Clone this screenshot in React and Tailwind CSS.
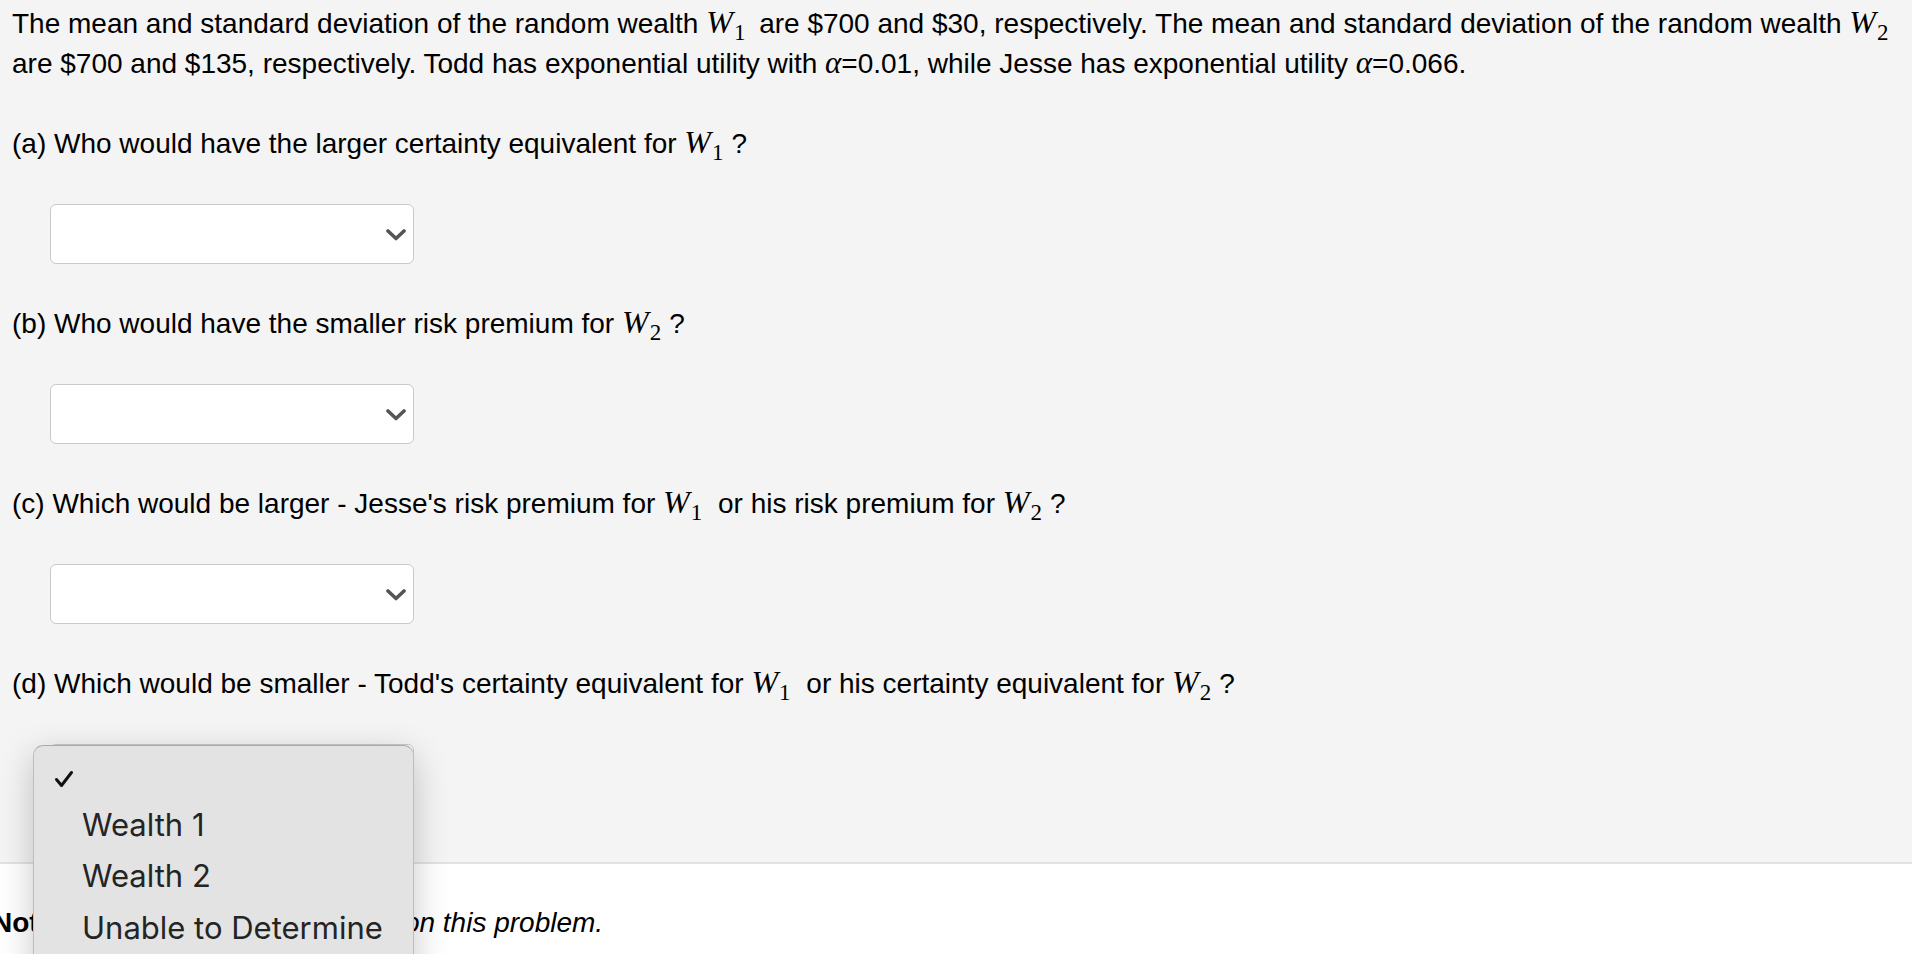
import React from "react";

// MathJax-style inline variable with a subscript
const Var = ({ sub, className = "" }) => (
  <span className={`whitespace-nowrap leading-[0] ${className}`}>
    <span className="font-['Liberation_Serif',serif] italic text-[32px] leading-[0]">W</span>
    <span className="relative top-[7px] ml-[1px] font-['Liberation_Serif',serif] text-[23px] leading-[0]">{sub}</span>
  </span>
);

const Alpha = () => (
  <span className="font-['Liberation_Serif',serif] italic text-[31px] leading-[0]">α</span>
);

const Chevron = () => (
  <svg width="20" height="12" viewBox="0 0 20 12" className="absolute right-[7px] top-[24px]">
    <polyline points="2,2 10,9.5 18,2" fill="none" stroke="#555" strokeWidth="3.6" strokeLinecap="round" strokeLinejoin="round" />
  </svg>
);

const Dropdown = () => (
  <div className="relative my-10 ml-[38px] h-[60px] w-[364px] rounded-[6px] border border-[#c9c9c9] bg-white">
    <Chevron />
  </div>
);

const questions = [
  { label: "(a) Who would have the larger certainty equivalent for ", tail: [{ sub: "1" }, "?"] },
  { label: "(b) Who would have the smaller risk premium for ", tail: [{ sub: "2" }, "?"] },
  {
    label: "(c) Which would be larger - Jesse's risk premium for ",
    tail: [{ sub: "1" }, " or his risk premium for ", { sub: "2" }, "?"],
  },
  {
    label: "(d) Which would be smaller - Todd's certainty equivalent for ",
    tail: [{ sub: "1" }, " or his certainty equivalent for ", { sub: "2" }, "?"],
  },
];

const options = ["Wealth 1", "Wealth 2", "Unable to Determine"];

export default function App() {
  return (
    <div className="relative h-[954px] w-full overflow-hidden bg-[#f4f4f4] font-['Liberation_Sans',Arial,sans-serif] text-[28px] leading-[40px] text-black">
      <div className="pl-3 pt-1">
        <p className="whitespace-nowrap">
          The mean and standard deviation of the random wealth <Var sub="1" className="mr-[6px]" /> are $700 and $30, respectively. The mean and
          standard deviation of the random wealth <Var sub="2" />
          <br />
          are $700 and $135, respectively. Todd has exponential utility with <Alpha />=0.01, while Jesse has exponential utility{" "}
          <Alpha />=0.066.
        </p>

        <div className="mt-10">
          {questions.map((q, i) => (
            <div key={i}>
              <p className="whitespace-nowrap">
                {q.label}
                {q.tail.map((t, j) =>
                  typeof t === "string" ? (
                    <span key={j}>{t}</span>
                  ) : (
                    <Var key={j} sub={t.sub} className="mr-[8px]" />
                  )
                )}
              </p>
              <Dropdown />
            </div>
          ))}
        </div>
      </div>

      {/* note section */}
      <div className="mt-[58px] border-t-2 border-[#e2e2e2] bg-white pt-[39px] pb-10">
        <p className="-ml-[8px] whitespace-nowrap italic">
          <span className="not-italic font-bold">Note:</span> You can earn partial credit on this problem.
        </p>
      </div>

      {/* open native-style menu for (d) */}
      <div className="absolute left-[33px] top-[745px] h-[260px] w-[381px] rounded-[10px] border border-[#bdbdbd] border-t-[#a9a9a9] bg-[#e3e3e3] pt-[1px] font-['Inter','Noto_Sans',sans-serif] text-[31px] leading-[51.5px] text-[#242424] shadow-[0_10px_34px_rgba(0,0,0,0.22)]">
        <div className="relative h-[51.5px] pl-[48px]">
          <svg width="20" height="18" viewBox="0 0 20 18" className="absolute left-[20px] top-[23px]">
            <polyline points="2.5,9.5 7.5,15.5 17.5,2.5" fill="none" stroke="#111" strokeWidth="3" strokeLinecap="round" strokeLinejoin="round" />
          </svg>
        </div>
        {options.map((o) => (
          <div key={o} className="h-[51.5px] whitespace-nowrap pl-[48px]">
            {o}
          </div>
        ))}
      </div>
    </div>
  );
}
